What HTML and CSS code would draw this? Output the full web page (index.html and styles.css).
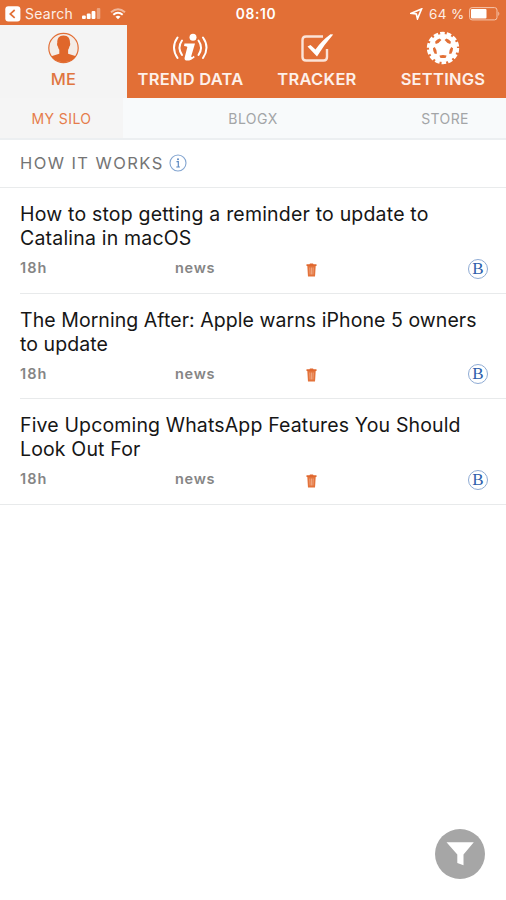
FILE: index.html
```html
<!DOCTYPE html>
<html lang="en">
<head>
<meta charset="utf-8">
<title>My Silo</title>
<link rel="stylesheet" href="styles.css">
</head>
<body>
<svg width="0" height="0" class="defs" aria-hidden="true">
  <symbol id="trash" viewBox="0 0 10 14">
    <path d="M0 1.200h3L3.500.6h3l.5.600h3v1.900H0z" fill="#e0682f"/>
    <path d="M.8 3h8.400L8.500 13.600h-7z" fill="#e3733b"/>
    <path d="M3.300 4.500l.3 7M5 4.500v7M6.700 4.500l-.3 7" stroke="#f3b899" stroke-width=".7" fill="none"/>
  </symbol>
</svg>
<header class="status">
  <div class="status-left">
    <svg class="back" viewBox="0 0 16 16"><rect x=".3" y=".3" width="15.100" height="15.100" rx="3" fill="#fff"/><path d="M9.700 4L5.300 7.900l4.400 3.900" fill="none" stroke="#e26f36" stroke-width="1.700"/></svg>
    <span class="search">Search</span>
    <svg class="signal" viewBox="0 0 21 12"><g fill="#fff"><rect x="0" y="7.500" width="3.800" height="3.500" rx="1"/><rect x="4.800" y="5.500" width="3.800" height="5.500" rx="1"/><rect x="9.600" y="3" width="3.800" height="8" rx="1"/><rect x="14.800" y="0" width="3.500" height="11" rx="1" opacity=".35"/></g></svg>
    <svg class="wifi" viewBox="0 0 16 12"><path d="M1 4.200Q8-1.700 15 4.200" fill="none" stroke="#fff" stroke-width="2" opacity=".5"/><path d="M3.300 6.700Q8 2.800 12.700 6.700" fill="none" stroke="#fff" stroke-width="2"/><path d="M5.500 8.800Q8 6.900 10.500 8.800L8 11.300z" fill="#fff"/></svg>
  </div>
  <div class="time">08:10</div>
  <div class="status-right">
    <svg class="location" viewBox="0 0 13 12"><path d="M1.300 5.300L11.500 1 7.500 10.700 6.300 6z" fill="none" stroke="#fff" stroke-width="1.700"/></svg>
    <span class="percent">64 %</span>
    <svg class="battery" viewBox="0 0 31 14"><rect x=".6" y=".6" width="27.400" height="12.300" rx="2.500" fill="none" stroke="#f5c6ae" stroke-width="1"/><rect x="2" y="2" width="15.500" height="9.500" rx="1" fill="#fff"/><path d="M29.300 4.500q2 2.200 0 4.500z" fill="#f5c6ae"/></svg>
  </div>
</header>
<nav class="tabs">
  <a class="tab tab-active">
    <svg class="tab-icon" viewBox="0 0 34 34"><circle cx="16.500" cy="17" r="14.700" fill="#f4ece7" stroke="#e26f36" stroke-width="1.200"/><path d="M16.500 4.500c4.700 0 6.700 3 6.500 7.500.5.300.3 2.900-.6 3.400-.3 1.600-.8 2.600-1.300 3.400v4l8 2.500C26.500 29 22 31.200 16.500 31.200S7 29 4.300 25.300l8-2.500v-4c-.5-.8-1.100-1.800-1.400-3.400-.9-.5-1.100-3.100-.6-3.400C10 7.500 12 4.500 16.500 4.500z" fill="#e0672b"/></svg>
    <span>ME</span>
  </a>
  <a class="tab">
    <svg class="tab-icon tab-icon-wide" viewBox="0 0 38 34"><g fill="none" stroke="#fff" stroke-width="2" stroke-linecap="round"><path d="M5.500 6.500Q-1.500 16.500 5.500 27"/><path d="M10 9.500Q5 16.500 10 24"/><path d="M31 6.500Q38 16.500 31 27"/><path d="M26.500 9.500Q31.500 16.500 26.500 24"/></g><circle cx="21" cy="6.300" r="3.500" fill="#fff"/><path d="M12.500 12.500h10.500l-3.700 12.500q-.3 1.500 1 .9l1.500-1.200.9 1.500c-3.200 3.500-11 5.200-10.100.5l2.700-10.400q.2-1-3.300-1.200z" fill="#fff"/></svg>
    <span>TREND DATA</span>
  </a>
  <a class="tab">
    <svg class="tab-icon" viewBox="0 0 34 34"><path d="M23 5.500H6Q2.500 5.500 2.500 9V26Q2.500 29.500 6 29.500H23.500Q27 29.500 27 26V18" fill="none" stroke="#fbe3d7" stroke-width="2.400"/><path d="M7.500 15.500l3-1.500 5 4.500Q21.500 9.700 30.500 3.200l2.700.2Q24.500 13 17 25.500z" fill="#fff"/></svg>
    <span>TRACKER</span>
  </a>
  <a class="tab">
    <svg class="tab-icon" viewBox="0 0 34 34"><circle cx="17" cy="17" r="14.700" fill="none" stroke="#fff" stroke-width="3" stroke-dasharray="4.600 1.998"/><circle cx="17" cy="17" r="14" fill="#fff"/><g fill="#e26f36"><path id="hole" d="M13.500 24.500q3.500-1.200 7 0l-.7 2.200q-2.800.8-5.600 0z"/><use href="#hole" transform="rotate(72 17 17)"/><use href="#hole" transform="rotate(144 17 17)"/><use href="#hole" transform="rotate(216 17 17)"/><use href="#hole" transform="rotate(288 17 17)"/></g></svg>
    <span>SETTINGS</span>
  </a>
</nav>
<nav class="subtabs">
  <a class="subtab subtab-active">MY SILO</a>
  <a class="subtab">BLOGX</a>
  <a class="subtab">STORE</a>
</nav>
<main>
  <div class="how"><h1>HOW IT WORKS</h1>
    <svg class="info" viewBox="0 0 18 18"><circle cx="9" cy="9" r="8" fill="none" stroke="#83a5d0" stroke-width="1.100"/><circle cx="9" cy="5.300" r="1" fill="#5d89c2"/><path d="M7.500 7.600H9.300V13M7.300 13h3.600" fill="none" stroke="#5d89c2" stroke-width="1.200"/></svg>
  </div>
  <article class="item item-first">
    <h2>How to stop getting a reminder to update to<br>Catalina in macOS</h2>
    <div class="meta"><span class="age">18h</span><span class="kind">news</span><svg class="trash"><use href="#trash"/></svg><span class="badge">B</span></div>
  </article>
  <article class="item">
    <h2>The Morning After: Apple warns iPhone 5 owners<br>to update</h2>
    <div class="meta"><span class="age">18h</span><span class="kind">news</span><svg class="trash"><use href="#trash"/></svg><span class="badge">B</span></div>
  </article>
  <article class="item item-last">
    <h2>Five Upcoming WhatsApp Features You Should<br>Look Out For</h2>
    <div class="meta"><span class="age">18h</span><span class="kind">news</span><svg class="trash"><use href="#trash"/></svg><span class="badge">B</span></div>
  </article>
</main>
<button class="filter" aria-label="Filter"><svg viewBox="0 0 50 50"><path d="M11.500 13.300h27.300L28.500 25.500v10.700L22.300 34v-8.500z" fill="#fff"/></svg></button>
</body>
</html>
```
FILE: styles.css
```css
* { box-sizing: border-box; }
body {
  margin: 0;
  height: 900px;
  overflow: hidden;
  background: #fff;
  font-family: Inter, "Liberation Sans", sans-serif;
  color: #161616;
}
svg { display: block; flex: none; }
.defs { position: absolute; }
.status {
  height: 25px;
  display: grid;
  grid-template-columns: 1fr auto 1fr;
  align-items: center;
  background: #e26f36;
  color: #fff;
  font-size: 14px;
  padding: 2px 6px 0 5px;
}
.status-left, .status-right { display: flex; align-items: center; }
.status-right { justify-content: flex-end; }
.back { width: 16px; height: 16px; margin-right: 4px; }
.search { letter-spacing: .25px; width: 48px; color: #fdeee6; }
.signal { width: 21px; height: 12px; margin-left: 9px; }
.wifi { width: 16px; height: 12px; margin-left: 7px; }
.time { font-weight: 600; font-size: 13.8px; letter-spacing: .6px; padding-left: 7px; }
.location { width: 13px; height: 12px; margin-right: 6px; }
.percent { font-size: 13.5px; letter-spacing: .4px; width: 37px; color: #fdeee6; white-space: nowrap; }
.battery { width: 31px; height: 14px; margin-left: 3px; }
.tabs {
  height: 73px;
  display: grid;
  grid-template-columns: 127px 127px 126px 126px;
  background: #e26f36;
}
.tab {
  display: flex;
  flex-direction: column;
  align-items: center;
  padding-top: 6px;
  color: #fdf0ea;
  font-size: 16.5px;
  font-weight: 600;
  line-height: 20px;
  letter-spacing: .25px;
  white-space: nowrap;
}
.tab-active { background: #f4f4f4; color: #e0753f; font-weight: 500; }
.tab-icon { width: 34px; height: 34px; margin-bottom: 4px; }
.tab-icon-wide { width: 38px; }
.subtabs {
  height: 42px;
  display: flex;
  justify-content: space-between;
  background: #f8fafb;
  border-bottom: 2px solid #eceff1;
  font-size: 14px;
  line-height: 41px;
  letter-spacing: .4px;
  color: #a3a5a7;
}
.subtab { width: 123px; text-align: center; }
.subtab:last-child { padding-left: 1px; }
.subtab-active { background: #f5f5f5; color: #e57c4b; }
.how {
  height: 48px;
  display: flex;
  align-items: center;
  padding: 0 0 1px 20px;
  border-bottom: 1px solid #e9ebec;
}
h1 { margin: 0; font-size: 16.5px; font-weight: 400; color: #747474; letter-spacing: 1.43px; }
.info { width: 18px; height: 18px; margin-left: 5px; }
.item { margin-left: 20px; height: 105.5px; padding-top: 14px; border-bottom: 1px solid #e8eaeb; }
.item-last { margin-left: 0; padding-left: 20px; }
h2 { margin: 0; font-size: 19.5px; line-height: 24.3px; font-weight: 400; white-space: nowrap; letter-spacing: .06px; }
.item-first h2 { letter-spacing: .19px; }
.item-last h2 { letter-spacing: .15px; }
.meta {
  display: grid;
  grid-template-columns: 155px 131px 1fr 20px;
  align-items: center;
  height: 20px;
  margin: 8px 18px 0 0;
  font-size: 14.5px;
  font-weight: 600;
  color: #858585;
}
.age, .kind { padding-bottom: 2px; letter-spacing: .7px; }
.age { letter-spacing: 1px; }
.trash { width: 11px; height: 14px; margin-top: 2px; }
.badge {
  width: 20px;
  height: 20px;
  border: 1px solid #8eabd4;
  border-radius: 50%;
  color: #2d5fab;
  font: 17px/18px "Liberation Serif", serif;
  text-align: center;
}
.filter {
  position: absolute;
  right: 21px;
  bottom: 21px;
  width: 50px;
  height: 50px;
  padding: 0;
  border: 0;
  border-radius: 50%;
  background: #a6a6a6;
}
```
